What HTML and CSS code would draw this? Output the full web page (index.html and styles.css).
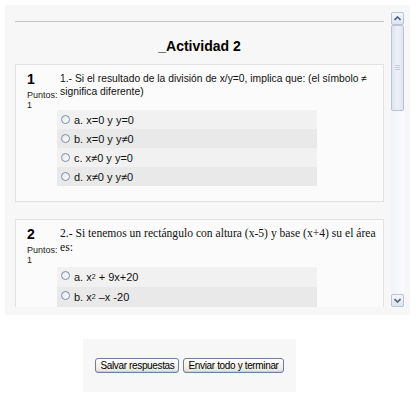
FILE: index.html
```html
<!DOCTYPE html>
<html lang="es">
<head>
<meta charset="utf-8">
<title>_Actividad 2</title>
<link rel="stylesheet" href="styles.css">
</head>
<body>
<div class="panel">
  <div class="viewport">
    <div class="content">
      <hr class="rule">
      <h2 class="title">_Actividad 2</h2>

      <div class="que">
        <div class="info">
          <div class="no">1</div>
          <div class="grade">Puntos: 1</div>
        </div>
        <div class="body">
          <div class="qtext">1.- Si el resultado de la división de x/y=0, implica que: (el símbolo ≠ significa diferente)</div>
          <div class="answers">
            <label class="ans r0"><span class="radio"></span>a. x=0 y y=0</label>
            <label class="ans r1"><span class="radio"></span>b. x=0 y y≠0</label>
            <label class="ans r0"><span class="radio"></span>c. x≠0 y y=0</label>
            <label class="ans r1"><span class="radio"></span>d. x≠0 y y≠0</label>
          </div>
        </div>
      </div>

      <div class="que">
        <div class="info">
          <div class="no">2</div>
          <div class="grade">Puntos: 1</div>
        </div>
        <div class="body">
          <div class="qtext serif">2.- Si tenemos un rectángulo con altura (x-5) y base (x+4) su el área es:</div>
          <div class="answers">
            <label class="ans r0 tall"><span class="radio up"></span>a. x<sup>2</sup>&nbsp;+ 9x+20</label>
            <label class="ans r1 tall"><span class="radio up"></span>b. x<sup>2</sup>&nbsp;–x -20</label>
          </div>
        </div>
      </div>
    </div>
  </div>
  <div class="scrollbar">
    <div class="sb-btn">
      <svg width="7" height="5" viewBox="0 0 7 5"><path d="M0.5 4 L3.5 1 L6.5 4" fill="none" stroke="#4d6185" stroke-width="1.6"/></svg>
    </div>
    <div class="sb-track">
      <div class="sb-thumb"><span class="grip"></span></div>
    </div>
    <div class="sb-btn">
      <svg width="7" height="5" viewBox="0 0 7 5"><path d="M0.5 1 L3.5 4 L6.5 1" fill="none" stroke="#4d6185" stroke-width="1.6"/></svg>
    </div>
  </div>
</div>

<div class="submitbar">
  <button class="btn" type="button">Salvar respuestas</button>
  <button class="btn" type="button">Enviar todo y terminar</button>
</div>
</body>
</html>
```

FILE: styles.css
```css
html, body {
  margin: 0;
  padding: 0;
  background: #ffffff;
  font-family: "Liberation Sans", Arial, sans-serif;
  color: #000;
}

.panel {
  margin: 5px 0 0 5px;
  width: 405px;
  height: 310px;
  box-sizing: border-box;
  background: #f7f7f7;
  padding: 7px 6px 8px 10px;
  display: flex;
}

.viewport {
  flex: 1;
  height: 295px;
  overflow: hidden;
}

.content {
  padding-right: 7px;
}

.rule {
  margin: 9px 0 0 0;
  border: 0;
  border-top: 1px solid #c4c4c4;
  height: 0;
}

.title {
  margin: 15px 0 0 0;
  text-align: center;
  font-size: 14px;
  font-weight: bold;
  line-height: 18px;
  height: 27px;
}

.que {
  display: flex;
  background: #fbfbfb;
  border: 1px solid #e2e2e2;
  padding: 5px 0 15px 0;
  margin-bottom: 17px;
}

.info {
  width: 32px;
  padding-left: 11px;
  flex: none;
}

.no {
  font-size: 14px;
  font-weight: bold;
  line-height: 16px;
  margin-top: 1px;
}

.grade {
  font-size: 9px;
  line-height: 10px;
  color: #222;
  width: 32px;
  margin-top: 3px;
}

.body {
  flex: 1;
  padding-right: 5px;
}

.qtext {
  font-size: 10.3px;
  line-height: 13px;
  color: #111;
  margin: 2px 0 0 1px;
}

.qtext.serif {
  font-family: "Liberation Serif", "Times New Roman", serif;
  font-size: 11.6px;
  line-height: 14px;
}

.answers {
  margin: 12px 0 0 -2px;
  width: 260px;
}

.ans {
  display: flex;
  align-items: center;
  height: 19px;
  font-size: 11px;
  color: #111;
  padding-left: 4px;
}

.ans.tall {
  height: 20px;
}

.ans sup {
  font-size: 7px;
  line-height: 0;
  vertical-align: 5px;
}

.r0 { background: #f1f1f1; }
.r1 { background: #e9e9e9; }

.radio {
  display: inline-block;
  width: 7px;
  height: 7px;
  border: 1px solid #7b8ea5;
  border-radius: 50%;
  background: linear-gradient(135deg, #e2e6ec, #ffffff);
  margin-right: 4px;
  flex: none;
}

.radio.up {
  align-self: flex-start;
  margin-top: 4px;
}

.scrollbar {
  width: 13px;
  height: 295px;
  display: flex;
  flex-direction: column;
  background: #eef0f7;
}

.sb-btn {
  height: 13px;
  box-sizing: border-box;
  border: 1px solid #b9c4d8;
  border-radius: 2px;
  background: linear-gradient(#f6f8fc, #dde3ef);
  display: flex;
  align-items: center;
  justify-content: center;
  flex: none;
}

.sb-track {
  flex: 1;
  background: linear-gradient(90deg, #f0f2f8, #fafbfe);
}

.sb-thumb {
  height: 86px;
  box-sizing: border-box;
  border: 1px solid #b9c2d6;
  border-radius: 2px;
  background: linear-gradient(90deg, #dfe4f0, #eef1f8 50%, #dfe4f0);
  display: flex;
  align-items: center;
  justify-content: center;
}

.grip {
  width: 5px;
  height: 6px;
  background: repeating-linear-gradient(#c3cbdc 0 1px, transparent 1px 2px);
}

.submitbar {
  margin: 24px 0 0 83px;
  width: 213px;
  height: 53px;
  background: #f7f7f7;
  display: flex;
  align-items: center;
  justify-content: center;
  gap: 4px;
}

.btn {
  flex: none;
  white-space: nowrap;
  font-family: "Liberation Sans", Arial, sans-serif;
  font-size: 10px;
  letter-spacing: -0.35px;
  height: 15px;
  line-height: 11px;
  padding: 0 4px;
  margin: 0;
  color: #000;
  border: 1px solid #6c7f9f;
  border-radius: 3px;
  background: linear-gradient(#ffffff, #ece9e4 85%, #d6d0c5);
  box-shadow: inset 0 -1px 0 #d6d0c5;
}
```
